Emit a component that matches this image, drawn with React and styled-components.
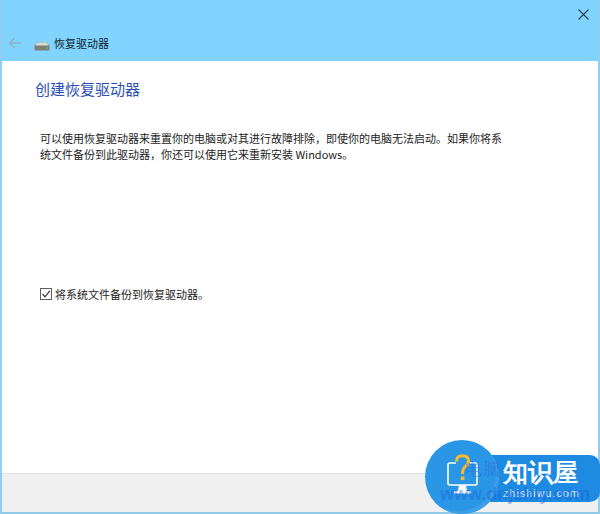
import React from 'react';
import styled, { createGlobalStyle } from 'styled-components';

const GlobalStyle = createGlobalStyle`
html, body {
    margin: 0;
    padding: 0;
    background: #ffffff;
}
`;

const Window = styled.div`
position: relative;
width: 600px;
height: 514px;
box-sizing: border-box;
display: flex;
flex-direction: column;
overflow: hidden;
border-left: 2px solid #8fd0f2;
border-right: 2px solid #8fd0f2;
border-bottom: 2px solid #8fcbe8;
background: #ffffff;
font-family: "Noto Sans CJK SC", "Liberation Sans", sans-serif;
color: #222222;
`;

const TitleBand = styled.header`
height: 61px;
flex: none;
box-sizing: border-box;
background: #80d4ff;
display: flex;
flex-direction: column;
`;

const CloseRow = styled.div`
height: 28px;
display: flex;
justify-content: flex-end;
align-items: flex-start;
padding: 9px 9px 0 0;
box-sizing: border-box;
`;

const NavRow = styled.div`
display: flex;
align-items: center;
height: 30px;
padding-left: 6px;
`;

const BackIcon = styled.svg`
width: 14px;
height: 14px;
margin-right: 12px;
`;

const DriveIcon = styled.svg`
width: 16px;
height: 9px;
margin: 6px 4px 0 0;
`;

const TitleText = styled.span`
font-size: 11px;
line-height: 16px;
color: #14232b;
`;

const Content = styled.main`
flex: 1;
box-sizing: border-box;
padding: 18px 0 0 33px;
display: flex;
flex-direction: column;
`;

const Heading = styled.h1`
margin: 0 0 32px 0;
font-size: 15px;
line-height: 20px;
font-weight: 400;
color: #2a4fb3;
`;

const Paragraph = styled.p`
margin: 0 0 0 5px;
font-size: 11px;
line-height: 15.5px;
color: #1c1c1c;
white-space: nowrap;
`;

const CheckRow = styled.label`
display: flex;
align-items: center;
margin: 124px 0 0 5px;
font-size: 11px;
line-height: 16px;
color: #1c1c1c;
`;

const CheckBox = styled.span`
width: 10px;
height: 10px;
border: 1px solid #5f5f5f;
margin-right: 3px;
display: flex;
align-items: center;
justify-content: center;
background: #ffffff;
`;

const Footer = styled.footer`
height: 38px;
flex: none;
background: #f0f0f0;
border-top: 1px solid #e3e3e3;
`;

const Badge = styled.div`
position: absolute;
left: 425px;
top: 455px;
width: 175px;
height: 59px;
overflow: visible;
`;

const BadgeCircle = styled.div`
position: absolute;
left: 0;
top: -15px;
width: 74px;
height: 74px;
border-radius: 50%;
background: #2a97e6;
box-shadow: inset -3px -3px 0 #3b9fe8;
`;

const BadgeBar = styled.div`
position: absolute;
left: 40px;
top: 0;
width: 135px;
height: 47px;
border-radius: 0 10px 10px 0;
background: #1e8ae2;
display: flex;
flex-direction: column;
align-items: flex-start;
padding-left: 38px;
box-sizing: border-box;
color: #ffffff;
`;

const BadgeName = styled.span`
font-size: 25px;
line-height: 29px;
font-weight: 700;
margin-top: 3px;
white-space: nowrap;
`;

const BadgeUrl = styled.span`
font-family: "Liberation Sans", sans-serif;
font-size: 10.5px;
line-height: 12px;
letter-spacing: 1.15px;
color: #e4f2fc;
white-space: nowrap;
`;

const BadgeIcon = styled.svg`
position: absolute;
left: 22px;
top: -1px;
width: 32px;
height: 41px;
`;

const WatermarkTop = styled.span`
position: absolute;
left: 465px;
top: 459px;
font-size: 17px;
line-height: 22px;
letter-spacing: 1px;
color: rgba(40, 95, 215, 0.45);
white-space: nowrap;
`;

const WatermarkBottom = styled.span`
position: absolute;
left: 440px;
top: 483px;
font-family: "Liberation Sans", sans-serif;
font-size: 18px;
line-height: 22px;
font-weight: 700;
color: rgba(20, 90, 215, 0.4);
white-space: nowrap;
`;

const App = () => {
    return (
        <>
            <GlobalStyle />
            <Window>
                <TitleBand>
                    <CloseRow>
                        <svg width="11" height="11" viewBox="0 0 11 11">
                            <path d="M0.5 0.5 L10.5 10.5 M10.5 0.5 L0.5 10.5" stroke="#24404f" strokeWidth="1.1" fill="none" />
                        </svg>
                    </CloseRow>
                    <NavRow>
                        <BackIcon viewBox="0 0 14 14">
                            <path d="M1.5 7 H13 M6.5 2 L1.5 7 L6.5 12" stroke="#8fb0c2" strokeWidth="1.5" fill="none" />
                        </BackIcon>
                        <DriveIcon viewBox="0 0 16 9">
                            <path d="M3 0.5 H13 L15.5 3.5 V7.5 Q15.5 8.5 14.5 8.5 H1.5 Q0.5 8.5 0.5 7.5 V3.5 Z" fill="#7d7d78" />
                            <path d="M3.2 0.5 H12.8 L15 3.6 H1 Z" fill="#d9d9d4" />
                            <rect x="12" y="5" width="2" height="2" fill="#58b848" />
                        </DriveIcon>
                        <TitleText>恢复驱动器</TitleText>
                    </NavRow>
                </TitleBand>
                <Content>
                    <Heading>创建恢复驱动器</Heading>
                    <Paragraph>
                        {'可以使用恢复驱动器来重置你的电脑或对其进行故障排除\uFF0C即使你的电脑无法启动。如果你将系'}<br />
                        {'统文件备份到此驱动器\uFF0C你还可以使用它来重新安装 Windows。'}
                    </Paragraph>
                    <CheckRow>
                        <CheckBox>
                            <svg width="10" height="10" viewBox="0 0 10 10">
                                <path d="M1.5 5 L4 7.8 L8.8 1.8" stroke="#333333" strokeWidth="1.2" fill="none" />
                            </svg>
                        </CheckBox>
                        将系统文件备份到恢复驱动器。
                    </CheckRow>
                </Content>
                <Footer />
            </Window>
            <Badge>
                <BadgeBar>
                    <BadgeName>知识屋</BadgeName>
                    <BadgeUrl>zhishiwu.com</BadgeUrl>
                </BadgeBar>
                <BadgeCircle />
                <BadgeIcon viewBox="0 0 32 41">
                    <path d="M9 9 H3 Q1 9 1 11 V29 Q1 31 3 31 H28 Q30 31 30 29 V11 Q30 9 28 9 H23" fill="none" stroke="#ffffff" strokeWidth="1.6" />
                    <path d="M12 31 H19 L20 37 H24 V39.5 H7 V37 H11 Z" fill="#ffffff" />
                    <path d="M9.5 7.5 Q9.5 1.8 15.5 1.8 Q21.5 1.8 21.5 7 Q21.5 10.5 18.5 12.5 Q15.5 14.5 15.5 20" fill="none" stroke="#f8b92c" strokeWidth="3" />
                    <rect x="13.8" y="22.5" width="3.6" height="3.6" fill="#f8b92c" />
                </BadgeIcon>
            </Badge>
            <WatermarkTop>电脑</WatermarkTop>
            <WatermarkBottom>www.dnjshiy.com</WatermarkBottom>
        </>
    );
};

export default App;
